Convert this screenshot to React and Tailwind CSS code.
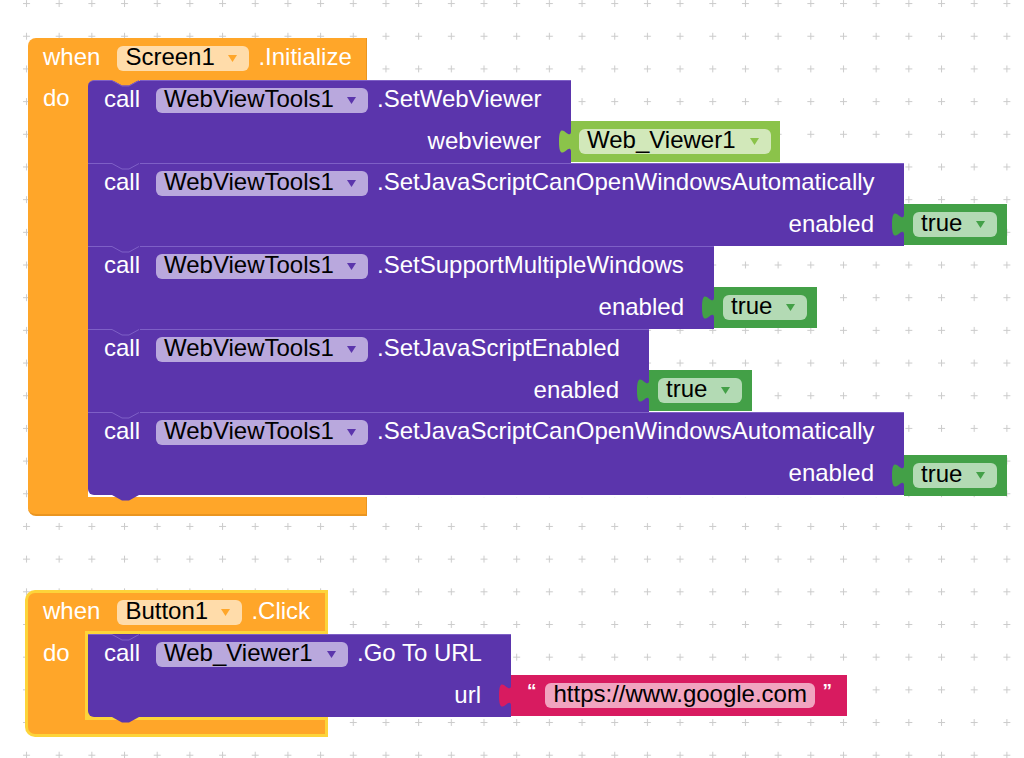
import React from "react";

const PURPLE = "#5b35ac";
const DARK_GREEN = "#43a047";
const LIGHT_GREEN = "#8bc34a";
const PINK = "#d81b60";

const Arrow = ({ className }) => (
  <svg width="9" height="7" viewBox="0 0 9 7" className={className}>
    <path d="M0 0 H9 L4.5 7 Z" fill="currentColor" />
  </svg>
);

const Field = ({ text, className, arrow }) => (
  <div className={`flex items-center justify-between h-[25px] rounded-[6px] pl-2 pr-3 ${className}`}>
    <span className="leading-none text-black mb-[3px]">{text}</span>
    <Arrow className={arrow} />
  </div>
);

// puzzle tab on the left side of a value block
const Tab = ({ color }) => (
  <svg className="absolute left-[-12px] top-[8px]" width="13" height="25" viewBox="0 0 8.5 15" preserveAspectRatio="none">
    <path d="M8.5 0 H8 C8 10 0 -8 0 7.5 C0 23 8 5 8 15 H8.5 Z" fill={color} />
  </svg>
);

const TrueBlock = () => (
  <div className="relative flex items-center w-[103px] h-[41px] pl-[9px] bg-[#43a047]">
    <Tab color={DARK_GREEN} />
    <Field text="true" className="w-[84px] bg-[#b3dab4]" arrow="text-[#43a047]" />
  </div>
);

const ComponentBlock = () => (
  <div className="relative flex items-center w-[209px] h-[41px] pl-[8px] bg-[#8bc34a]">
    <Tab color={LIGHT_GREEN} />
    <Field text="Web_Viewer1" className="w-[192px] bg-[#d2e8ba]" arrow="text-[#8bc34a]" />
  </div>
);

const TextBlock = ({ text }) => (
  <div className="relative flex items-center w-[336px] h-[41px] pl-[16px] bg-[#d81b60] text-white">
    <Tab color={PINK} />
    <span className="text-[19px] font-bold leading-none -mt-[10px]">“</span>
    <div className="flex items-center ml-[8px] w-[270px] h-[25px] rounded-[6px] pl-[9px] bg-[#f1a4c0] text-black">
      <span className="leading-none mb-[3px]">{text}</span>
    </div>
    <span className="ml-[8px] text-[19px] font-bold leading-none -mt-[10px]">”</span>
  </div>
);

const Notch = ({ first }) => (
  <svg className="absolute left-[24px] top-[-1px]" width="28" height="7" viewBox="0 0 28 7">
    <rect x="0" y="0" width="28" height="1" fill={first ? "#ffa629" : PURPLE} />
    {first && <path d="M0 0 L10 5.5 L17 5.5 L27 0 Z" fill="#ffa629" />}
    <path d="M0 0.5 L10 6 L17 6 L27 0.5" stroke="#7e60c6" strokeWidth="1" fill="none" />
  </svg>
);

const BottomTab = () => (
  <svg className="absolute left-[24px] top-full" width="28" height="7" viewBox="0 0 28 7">
    <path d="M0 0 L10 5.5 L17 5.5 L27 0 Z" fill={PURPLE} />
  </svg>
);

const CallBlock = ({ component, compWidth, method, label, width, value, first, last, cornerBg }) => (
  <div className="flex items-end">
    <div className={cornerBg}>
      <div
        className={`relative flex flex-col bg-[#5b35ac] border-t border-[#7e60c6] text-white ${width} ${
          first ? "rounded-tl-[6px]" : ""
        } ${last ? "rounded-bl-[6px]" : ""}`}
      >
        <div className="flex items-center h-[40px] pl-4 pb-[2px]">
          <span className="leading-none mb-[3px]">call</span>
          <Field text={component} className={`ml-[16px] bg-[#b9a8dd] ${compWidth}`} arrow="text-[#5b35ac]" />
          <span className="ml-[9px] leading-none mb-[3px]">{method}</span>
        </div>
        <div className="flex items-center justify-end h-[42px] pr-[30px]">
          <span className="leading-none mb-[3px]">{label}</span>
        </div>
        <Notch first={first} />
        {last && <BottomTab />}
      </div>
    </div>
    <div className="mb-px">{value}</div>
  </div>
);

const Grid = () => (
  <svg className="absolute inset-0" width="1024" height="758">
    <defs>
      <pattern id="grid" x="23" y="0.1" width="32.68" height="32.68" patternUnits="userSpaceOnUse">
        <path d="M3.5 0 V7 M0 3.5 H7" stroke="#cbcbcb" strokeWidth="1" />
      </pattern>
    </defs>
    <rect width="1024" height="758" fill="url(#grid)" />
  </svg>
);

const InitializeEvent = () => (
  <div className="absolute left-[28px] top-[38px] flex flex-col">
    <div className="flex items-center w-[339px] h-[42px] pl-[15px] pb-[1px] bg-[#ffa629] rounded-tl-[8px] border-r border-[#ea9520] text-white">
      <span className="leading-none mb-[3px]">when</span>
      <Field text="Screen1" className="ml-[17px] w-[132px] bg-[#ffdcaa]" arrow="text-[#ffa629]" />
      <span className="ml-[9px] leading-none mb-[3px]">.Initialize</span>
    </div>
    <div className="flex">
      <div className="w-[60px] bg-[#ffa629] text-white">
        <div className="flex items-center h-[41px] pl-[15px] pb-[2px]">
          <span className="leading-none mb-[3px]">do</span>
        </div>
      </div>
      <div className="flex flex-col items-start">
        <CallBlock
          first
          cornerBg="bg-[#ffa629]"
          component="WebViewTools1"
          compWidth="w-[212px]"
          method=".SetWebViewer"
          label="webviewer"
          width="w-[483px]"
          value={<ComponentBlock />}
        />
        <CallBlock
          component="WebViewTools1"
          compWidth="w-[212px]"
          method=".SetJavaScriptCanOpenWindowsAutomatically"
          label="enabled"
          width="w-[816px]"
          value={<TrueBlock />}
        />
        <CallBlock
          component="WebViewTools1"
          compWidth="w-[212px]"
          method=".SetSupportMultipleWindows"
          label="enabled"
          width="w-[626px]"
          value={<TrueBlock />}
        />
        <CallBlock
          component="WebViewTools1"
          compWidth="w-[212px]"
          method=".SetJavaScriptEnabled"
          label="enabled"
          width="w-[561px]"
          value={<TrueBlock />}
        />
        <CallBlock
          last
          cornerBg="bg-white pb-[2px]"
          component="WebViewTools1"
          compWidth="w-[212px]"
          method=".SetJavaScriptCanOpenWindowsAutomatically"
          label="enabled"
          width="w-[816px]"
          value={<TrueBlock />}
        />
      </div>
    </div>
    <div className="w-[339px] h-[19px] bg-[#ffa629] rounded-bl-[8px] border-b-2 border-r border-[#ea9520]" />
  </div>
);

const ClickEvent = () => (
  <div className="absolute left-[25px] top-[590px] flex flex-col">
    <div className="w-[303px] bg-[#ffa629] rounded-tl-[10px] border-[3px] border-b-0 border-[#fdd43a] text-white">
      <div className="flex items-center h-[38px] pl-[15px]">
        <span className="leading-none mb-[3px]">when</span>
        <Field text="Button1" className="ml-[17px] w-[125px] bg-[#ffdcaa]" arrow="text-[#ffa629]" />
        <span className="ml-[9px] leading-none mb-[3px]">.Click</span>
      </div>
      <div className="ml-[57px] h-[3px] bg-[#fdd43a]" />
    </div>
    <div className="flex">
      <div className="w-[63px] bg-[#ffa629] border-l-[3px] border-r-[3px] border-[#fdd43a] text-white">
        <div className="flex items-center h-[41px] pl-[15px]">
          <span className="leading-none mb-[3px]">do</span>
        </div>
      </div>
      <div className="flex flex-col items-start">
        <CallBlock
          last
          cornerBg="bg-[#fdd43a]"
          component="Web_Viewer1"
          compWidth="w-[192px]"
          method=".Go To URL"
          label="url"
          width="w-[423px]"
          value={<TextBlock text="https://www.google.com" />}
        />
      </div>
    </div>
    <div className="w-[303px] bg-[#ffa629] rounded-bl-[10px] border-[3px] border-t-0 border-[#fdd43a]">
      <div className="ml-[57px] h-[3px] bg-[#fdd43a]" />
      <div className="h-[14px]" />
    </div>
  </div>
);

export default function App() {
  return (
    <div className="relative w-[1024px] h-[758px] overflow-hidden bg-white font-['Liberation_Sans',Arial,sans-serif] text-[24px]">
      <Grid />
      <InitializeEvent />
      <ClickEvent />
    </div>
  );
}
